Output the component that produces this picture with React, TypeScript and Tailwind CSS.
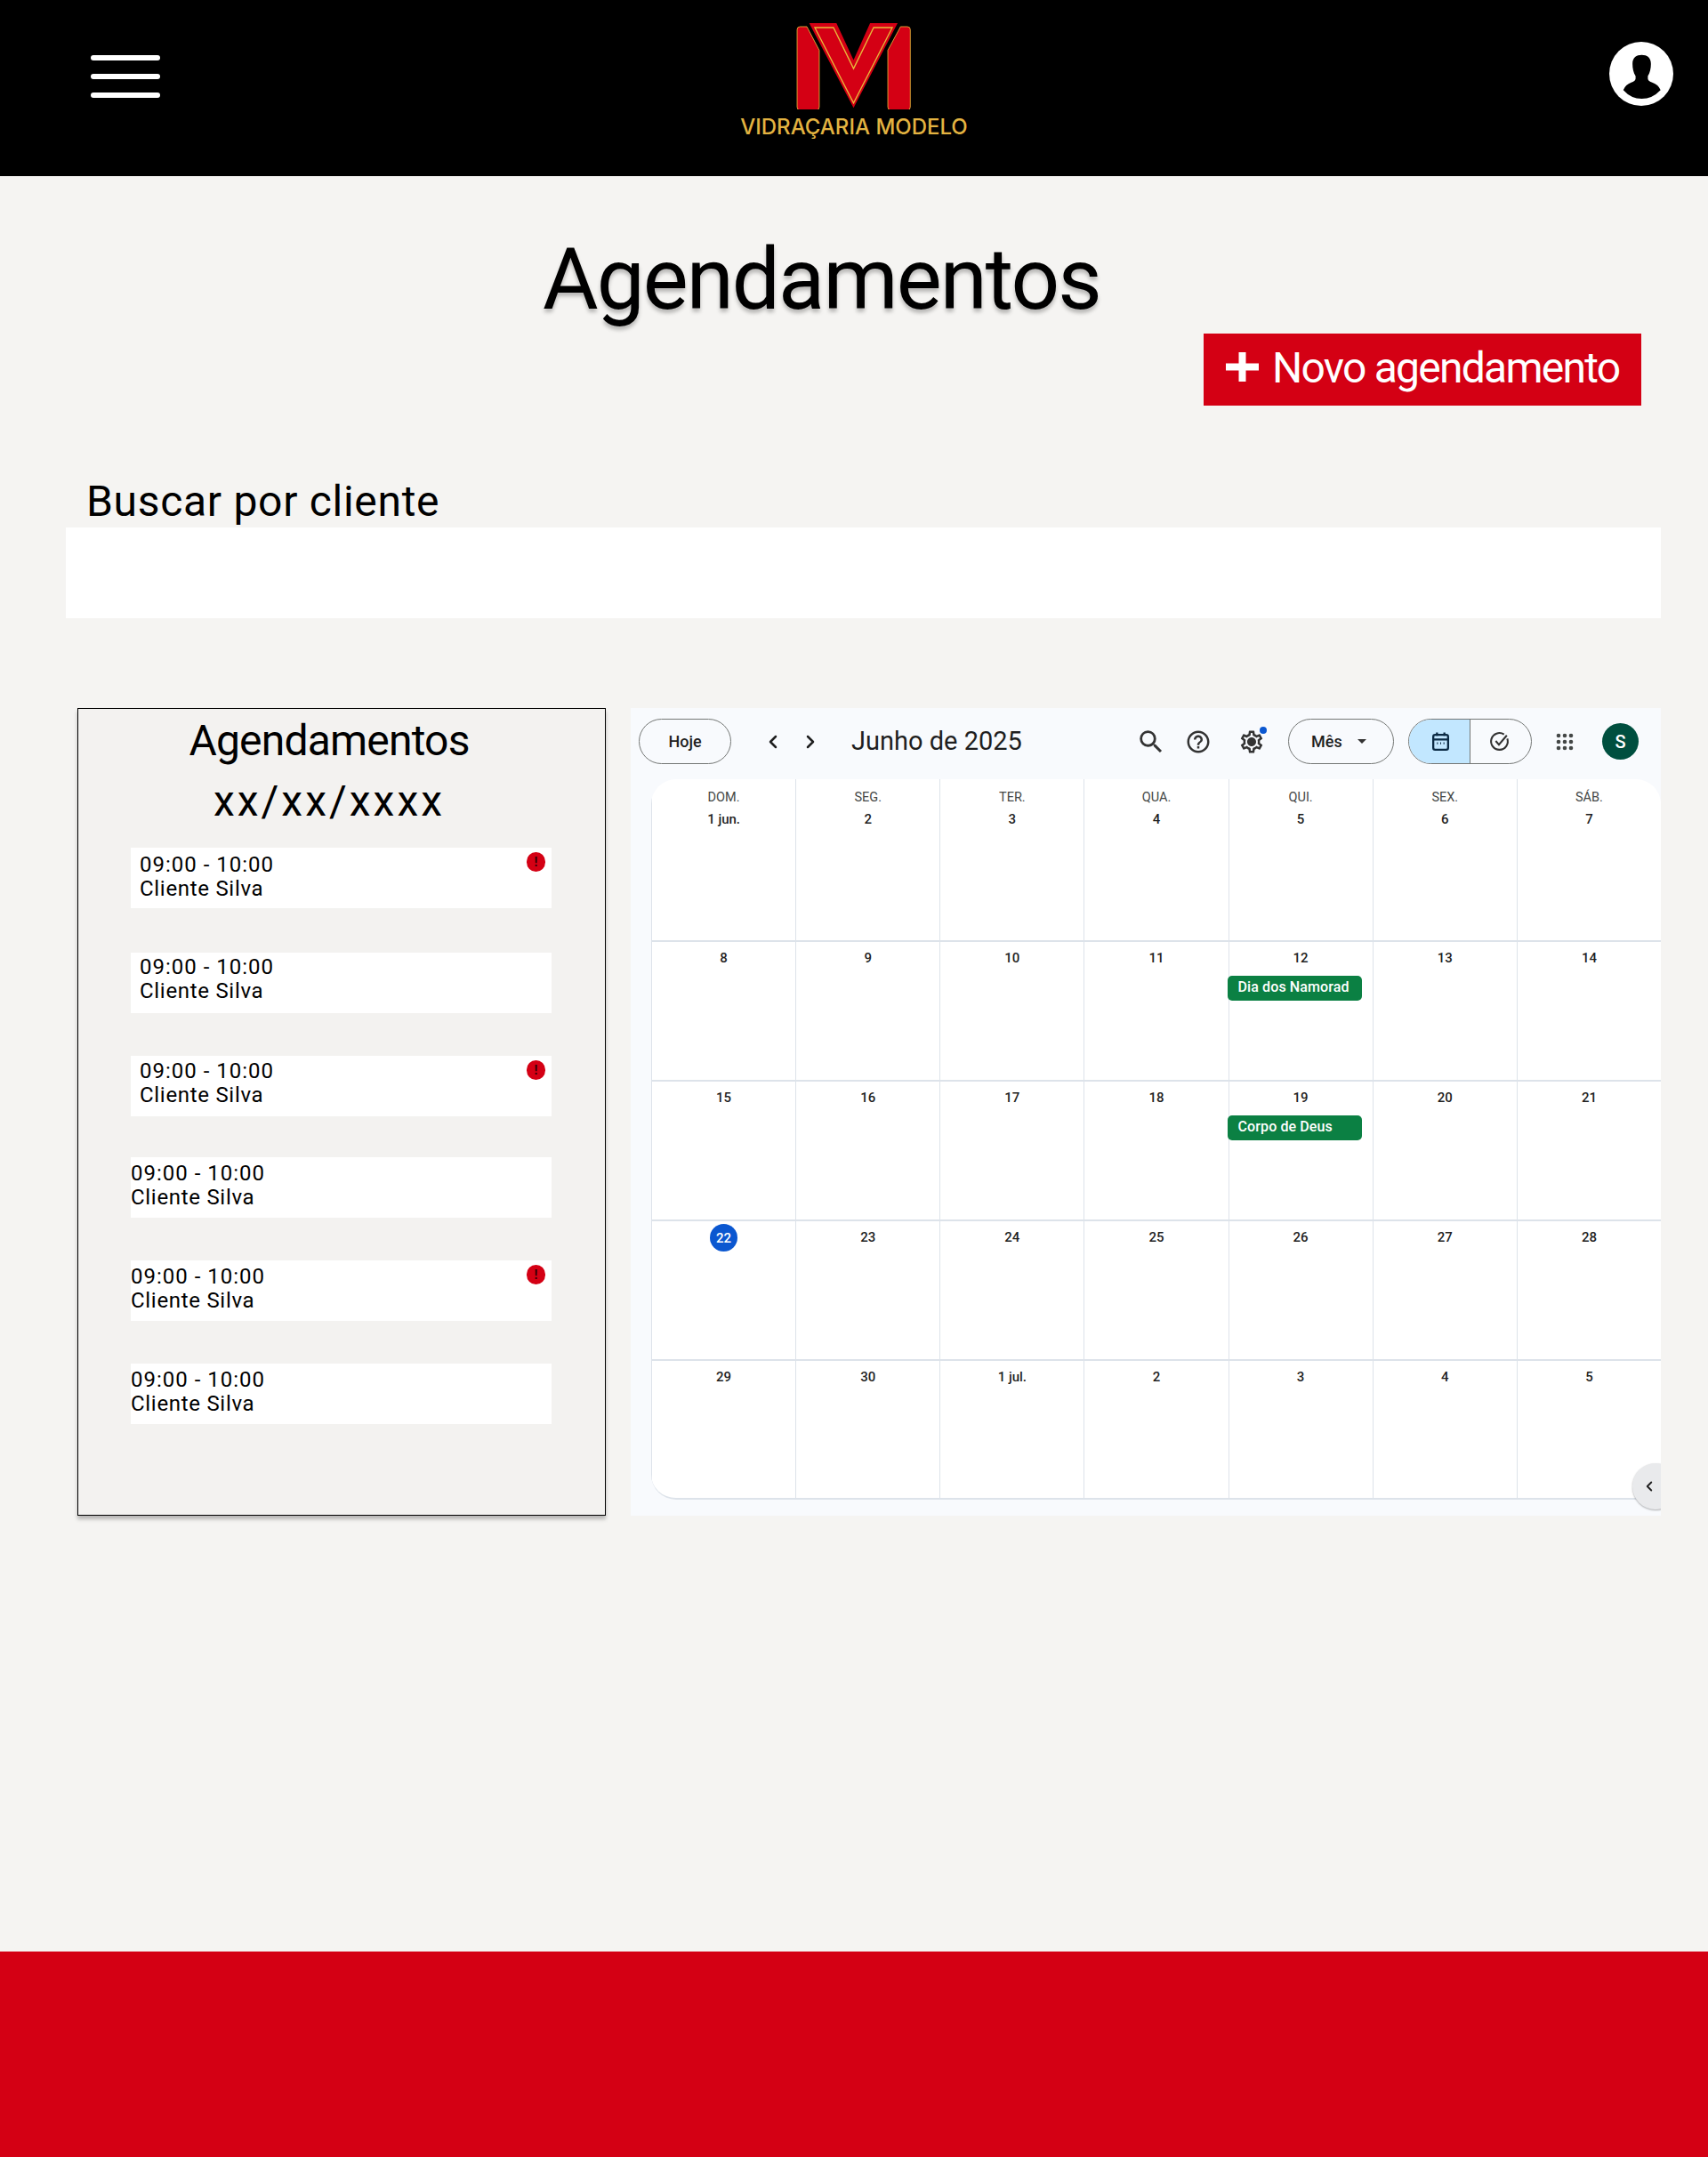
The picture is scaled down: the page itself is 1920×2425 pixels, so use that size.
import { ChevronLeft, ChevronRight } from "lucide-react";

const bahn = "font-['Roboto',sans-serif]";

const appointments = [
  { inset: true, alert: true, mt: "mt-0", pt: "pt-[6px]" },
  { inset: true, alert: false, mt: "mt-[50px]", pt: "pt-[3px]" },
  { inset: true, alert: true, mt: "mt-[48px]", pt: "pt-[4px]" },
  { inset: false, alert: false, mt: "mt-[46px]", pt: "pt-[5px]" },
  { inset: false, alert: true, mt: "mt-[48px]", pt: "pt-[5px]" },
  { inset: false, alert: false, mt: "mt-[48px]", pt: "pt-[5px]" },
];

const weeks = [
  ["1 jun.", "2", "3", "4", "5", "6", "7"],
  ["8", "9", "10", "11", "12", "13", "14"],
  ["15", "16", "17", "18", "19", "20", "21"],
  ["22", "23", "24", "25", "26", "27", "28"],
  ["29", "30", "1 jul.", "2", "3", "4", "5"],
];

const weekdays = ["DOM.", "SEG.", "TER.", "QUA.", "QUI.", "SEX.", "SÁB."];

const events: Record<string, string> = { "12": "Dia dos Namorad", "19": "Corpo de Deus" };

function Logo() {
  return (
    <div className="flex flex-col items-center">
      <svg viewBox="340 75 395 295" className="h-[98px] w-[132px]">
        <path
          d="M355 90H378L420 170V362Q420 373 409 373H356Q345 373 345 362V100Q345 90 355 90Z"
          fill="#d40014"
          stroke="#e8b93b"
          strokeWidth="2.5"
        />
        <path
          d="M718 90H695L652 170V362Q652 373 663 373H717Q728 373 728 362V100Q728 90 718 90Z"
          fill="#d40014"
          stroke="#e8b93b"
          strokeWidth="2.5"
        />
        <path d="M386 78H478L536 203L592 78H685L536 365Z" fill="#d40014" />
        <path d="M405 93H468L536 232L604 93H667L536 348Z" fill="none" stroke="#e8b93b" strokeWidth="4" />
      </svg>
      <span className="mt-[8px] font-['Inter',sans-serif] text-[24px] leading-[24px] font-medium tracking-[0px] whitespace-nowrap text-[#e3b341]">
        VIDRAÇARIA MODELO
      </span>
    </div>
  );
}

function Header() {
  return (
    <header className="grid h-[198px] shrink-0 grid-cols-3 bg-black">
      <div className="flex flex-col gap-[15px] pt-[62px] pl-[102px]">
        <span className="h-[6px] w-[78px] rounded-full bg-white" />
        <span className="h-[6px] w-[78px] rounded-full bg-white" />
        <span className="h-[6px] w-[78px] rounded-full bg-white" />
      </div>
      <div className="flex justify-center pt-[25px]">
        <Logo />
      </div>
      <div className="flex justify-end pt-[47px] pr-[39px]">
        <svg viewBox="0 0 73 73" className="h-[72px] w-[72px]">
          <circle cx="36.5" cy="36.5" r="36.5" fill="#fff" />
          <path
            d="M37 15C43 15 47.5 18 47.5 25C47.5 30 46.5 35 44 39L44 42Q44.5 45 49 46.5Q56 49 58.5 55Q49 65 37 65Q25 65 16 55Q18.5 49 25 46.5Q29.5 45 30 42L30 39C27.5 35 26.5 30 26.5 25C26.5 18 31 15 37 15Z"
            fill="#000"
          />
        </svg>
      </div>
    </header>
  );
}

function AppointmentRow({ inset, alert, mt, pt }: { inset: boolean; alert: boolean; mt: string; pt: string }) {
  return (
    <div className={`relative h-[68px] w-[473px] bg-white text-[24px] leading-[27px] text-black ${mt} ${pt} ${inset ? "pl-[10px]" : ""}`}>
      <p className="tracking-[1px]">09:00 - 10:00</p>
      <p className="tracking-[0.7px]">Cliente Silva</p>
      {alert && (
        <span className="absolute top-[5px] right-[7px] flex h-[22px] w-[21px] items-center justify-center rounded-full bg-[#d40014] text-[14px] leading-none font-bold text-[#330005]">
          !
        </span>
      )}
    </div>
  );
}

function AppointmentsPanel() {
  return (
    <aside className={`h-[908px] w-[594px] shrink-0 border border-black bg-[#f3f2f0] shadow-[0_4px_4px_rgba(0,0,0,0.25)] ${bahn}`}>
      <div className="pt-[2px] pr-[28px] text-center text-[48px] leading-[68px] text-black">
        <p className="tracking-[-0.8px]">Agendamentos</p>
        <p className="tracking-[3px]">xx/xx/xxxx</p>
      </div>
      <div className="mt-[18px] flex flex-col pl-[59px]">
        {appointments.map((a, i) => (
          <AppointmentRow key={i} {...a} />
        ))}
      </div>
    </aside>
  );
}

function Pill({ className, children }: { className: string; children: React.ReactNode }) {
  return (
    <div className={`flex h-[51px] items-center rounded-full border border-[#747775] ${className}`}>{children}</div>
  );
}

function CalendarToolbar() {
  return (
    <div className="flex h-[80px] items-center pb-[5px] pl-[9px] text-[#1f1f1f]">
      <Pill className="w-[104px] justify-center text-[18px] font-medium">Hoje</Pill>
      <ChevronLeft className="ml-[35px] h-[24px] w-[24px]" strokeWidth={2.5} />
      <ChevronRight className="ml-[18px] h-[24px] w-[24px]" strokeWidth={2.5} />
      <span className="ml-[34px] w-[190px] text-[29px] leading-none whitespace-nowrap">Junho de 2025</span>
      <svg viewBox="0 0 24 24" className="ml-[130px] h-[34px] w-[34px]" fill="#333">
        <path d="M15.5 14h-.79l-.28-.27A6.471 6.471 0 0 0 16 9.5 6.5 6.5 0 1 0 9.5 16c1.61 0 3.09-.59 4.23-1.57l.27.28v.79l5 4.99L20.49 19l-4.99-5zm-6 0C7.01 14 5 11.99 5 9.5S7.01 5 9.5 5 14 7.01 14 9.5 11.99 14 9.5 14z" />
      </svg>
      <svg viewBox="0 0 24 24" className="ml-[21px] h-[30px] w-[30px]" fill="#333">
        <path d="M11 18h2v-2h-2v2zm1-16C6.48 2 2 6.48 2 12s4.48 10 10 10 10-4.48 10-10S17.52 2 12 2zm0 18c-4.41 0-8-3.59-8-8s3.59-8 8-8 8 3.59 8 8-3.59 8-8 8zm0-14c-2.21 0-4 1.79-4 4h2c0-1.1.9-2 2-2s2 .9 2 2c0 2-3 1.75-3 5h2c0-2.25 3-2.5 3-5 0-2.21-1.79-4-4-4z" />
      </svg>
      <div className="relative ml-[30px] h-[30px] w-[30px]">
        <svg viewBox="0 0 24 24" className="h-[30px] w-[30px]" fill="#333">
          <path d="M19.43 12.98c.04-.32.07-.64.07-.98 0-.34-.03-.66-.07-.98l2.11-1.65c.19-.15.24-.42.12-.64l-2-3.46c-.09-.16-.26-.25-.44-.25-.06 0-.12.01-.17.03l-2.49 1c-.52-.4-1.08-.73-1.69-.98l-.38-2.65C14.46 2.18 14.25 2 14 2h-4c-.25 0-.46.18-.49.42l-.38 2.65c-.61.25-1.17.59-1.69.98l-2.49-1c-.06-.02-.12-.03-.18-.03-.17 0-.34.09-.43.25l-2 3.46c-.13.22-.07.49.12.64l2.11 1.65c-.04.32-.07.65-.07.98 0 .33.03.66.07.98l-2.11 1.65c-.19.15-.24.42-.12.64l2 3.46c.09.16.26.25.44.25.06 0 .12-.01.17-.03l2.49-1c.52.4 1.08.73 1.69.98l.38 2.65c.03.24.24.42.49.42h4c.25 0 .46-.18.49-.42l.38-2.65c.61-.25 1.17-.59 1.69-.98l2.49 1c.06.02.12.03.18.03.17 0 .34-.09.43-.25l2-3.46c.12-.22.07-.49-.12-.64l-2.11-1.65zm-1.98-1.71c.04.31.05.52.05.73 0 .21-.02.43-.05.73l-.14 1.13.89.7 1.08.84-.7 1.21-1.27-.51-1.04-.42-.9.68c-.43.32-.84.56-1.25.73l-1.06.43-.16 1.13-.2 1.35h-1.4l-.19-1.35-.16-1.13-1.06-.43c-.43-.18-.83-.41-1.23-.71l-.91-.7-1.06.43-1.27.51-.7-1.21 1.08-.84.89-.7-.14-1.13c-.03-.31-.05-.54-.05-.74s.02-.43.05-.73l.14-1.13-.89-.7-1.08-.84.7-1.21 1.27.51 1.04.42.9-.68c.43-.32.84-.56 1.25-.73l1.06-.43.16-1.13.2-1.35h1.39l.19 1.35.16 1.13 1.06.43c.43.18.83.41 1.23.71l.91.7 1.06-.43 1.27-.51.7 1.21-1.07.85-.89.7.14 1.13zM12 8c-2.21 0-4 1.79-4 4s1.79 4 4 4 4-1.79 4-4-1.79-4-4-4z" />
        </svg>
        <span className="absolute -top-[2px] -right-[2px] h-[8px] w-[8px] rounded-full bg-[#0b57d0]" />
      </div>
      <Pill className="ml-[26px] w-[119px] pl-[25px] text-[18px] font-medium">
        Mês
        <span className="ml-[17px] h-0 w-0 border-x-[5px] border-t-[5px] border-x-transparent border-t-[#333]" />
      </Pill>
      <Pill className="ml-[16px] w-[139px] overflow-hidden">
        <div className="flex h-full w-[69px] items-center justify-center border-r border-[#747775] bg-[#c2e7ff]">
          <svg viewBox="0 0 24 24" className="ml-[2px] h-[25px] w-[25px]" fill="none" stroke="#0b2a44" strokeWidth="2.2">
            <rect x="4" y="5" width="16" height="16" rx="2" />
            <path d="M4 10H20M8 2.5V6M16 2.5V6" />
            <path d="M8 14H9M11.5 14H12.5M15 14H16" />
          </svg>
        </div>
        <div className="flex flex-1 items-center justify-center pr-[3px]">
          <svg viewBox="0 0 24 24" className="h-[25px] w-[25px]" fill="none" stroke="#333" strokeWidth="2">
            <path d="M20.5 9A9 9 0 1 1 17 4.5" />
            <path d="M8 11.5L11.5 15.5L20 5.5" />
          </svg>
        </div>
      </Pill>
      <svg viewBox="0 0 20 20" className="ml-[27px] h-[20px] w-[20px]" fill="#444746">
        {[3, 10, 17].flatMap((y) =>
          [3, 10, 17].map((x) => <circle key={`${x}-${y}`} cx={x} cy={y} r="2.3" />),
        )}
      </svg>
      <span className="ml-[32px] flex h-[41px] w-[41px] items-center justify-center rounded-full bg-[#004f3f] text-[20px] font-medium text-white">
        S
      </span>
    </div>
  );
}

function DayCell({ day, weekday, row }: { day: string; weekday?: string; row: number }) {
  const today = day === "22";
  const event = row > 0 ? events[day] : undefined;
  return (
    <div className="min-w-0 border-l-2 border-[#dde3ea] text-center text-[15px] leading-[20px] font-medium text-[#1f1f1f] first:border-l">
      {weekday ? (
        <div className="pt-[11px]">
          <p className="text-[14.5px] leading-[20px] font-normal text-[#444746]">{weekday}</p>
          <p className="mt-[4px]">{day}</p>
        </div>
      ) : today ? (
        <div className="flex justify-center pt-[3px]">
          <span className="flex h-[31px] w-[31px] items-center justify-center rounded-full bg-[#0b57d0] text-white">{day}</span>
        </div>
      ) : (
        <p className="pt-[8px]">{day}</p>
      )}
      {event && (
        <div className="mt-[10px] -ml-[2px] h-[28px] w-[151px] overflow-hidden rounded-[5px] bg-[#0b8043] pl-[12px] text-left text-[16px] leading-[26px] tracking-[0.1px] whitespace-nowrap text-white">
          {event}
        </div>
      )}
    </div>
  );
}

function CalendarPanel() {
  return (
    <section className="relative h-[908px] w-[1158px] shrink-0 overflow-hidden bg-[#f8fafd] font-['Roboto',sans-serif]">
      <CalendarToolbar />
      <div className="ml-[23px] grid h-[810px] grid-cols-7 grid-rows-[181px_157px_157px_157px_158px] overflow-hidden rounded-tl-[28px] rounded-tr-[28px] rounded-bl-[28px] border-b-2 border-[#dde3ea] bg-white">
        {weeks.flatMap((week, r) =>
          week.map((day, c) => (
            <div key={`${r}-${c}`} className={`grid ${r > 0 ? "border-t-2 border-[#dde3ea]" : ""}`}>
              <DayCell day={day} weekday={r === 0 ? weekdays[c] : undefined} row={r} />
            </div>
          )),
        )}
      </div>
      <span className="absolute top-[849px] -right-[20px] flex h-[52px] w-[52px] items-center rounded-full bg-[#e9eaec] pl-[10px] shadow-[0_1px_2px_rgba(0,0,0,0.3)]">
        <ChevronLeft className="h-[18px] w-[18px] text-[#1f1f1f]" strokeWidth={2.5} />
      </span>
    </section>
  );
}

export default function App() {
  return (
    <div className="flex min-h-[2425px] flex-col bg-[#f5f4f2]">
      <Header />
      <main className={`flex flex-1 flex-col ${bahn}`}>
        <h1 className="mt-[60px] ml-[610px] text-[96px] leading-[112px] tracking-[-1.9px] text-black [text-shadow:0_4px_4px_rgba(0,0,0,0.25)]">
          Agendamentos
        </h1>
        <div className="mt-[5px] mr-[75px] flex h-[81px] w-[492px] items-center self-end bg-[#d40014] pl-[25px] text-[48px] leading-none tracking-[-1.75px] text-white">
          <svg viewBox="0 0 37 33" className="mb-[7px] h-[33px] w-[37px]" fill="none" stroke="#fff" strokeWidth="8">
            <path d="M18.5 0V33M0 16.5H37" />
          </svg>
          <span className="mb-[4px] ml-[15px] whitespace-nowrap">Novo agendamento</span>
        </div>
        <p className="mt-[80px] ml-[97px] text-[48px] leading-[56px] tracking-[0.7px] text-black">Buscar por cliente</p>
        <div className="mt-[1px] ml-[74px] h-[102px] w-[1793px] bg-white" />
        <div className="mt-[101px] ml-[87px] flex gap-[28px]">
          <AppointmentsPanel />
          <CalendarPanel />
        </div>
      </main>
      <footer className="h-[231px] shrink-0 bg-[#d40014]" />
    </div>
  );
}
